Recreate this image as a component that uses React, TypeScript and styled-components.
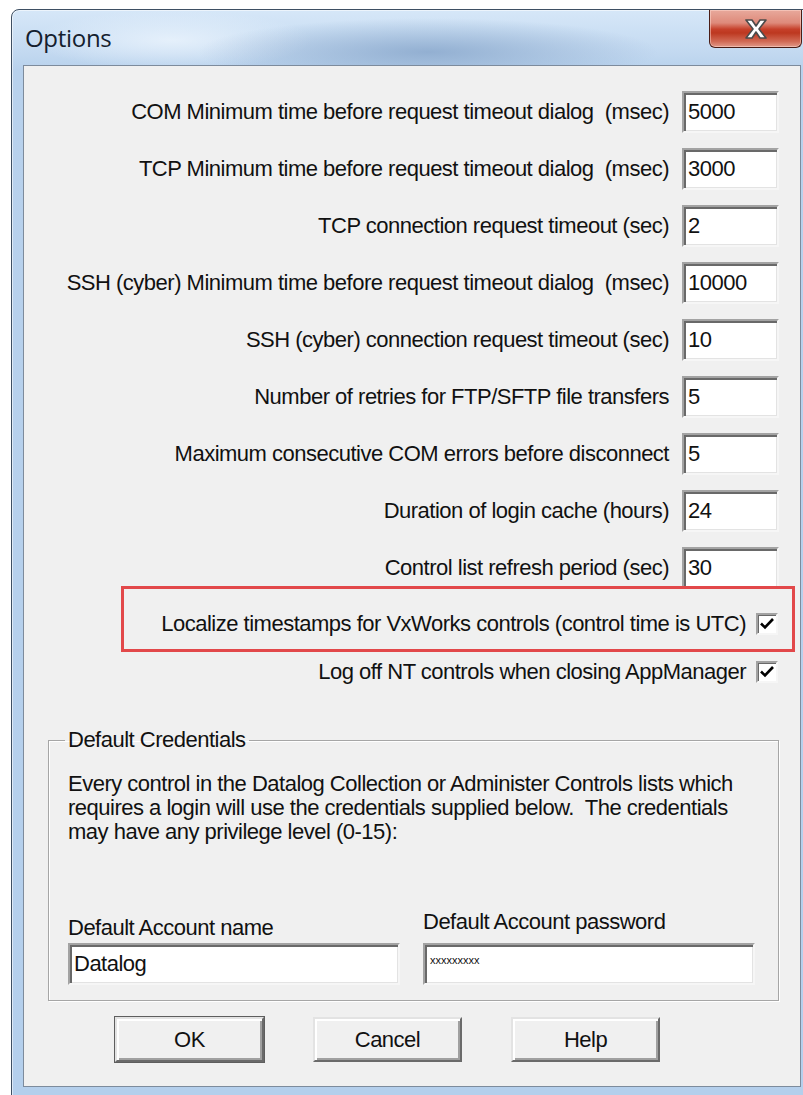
import React from "react";
import styled, { createGlobalStyle } from "styled-components";

const GlobalStyle = createGlobalStyle`
  html, body {
    margin: 0;
    padding: 0;
    background: #fff;
  }
  body {
    font-family: "Liberation Sans", Arial, sans-serif;
  }
`;

const Screen = styled.div`
  position: relative;
  width: 803px;
  height: 1095px;
  overflow: hidden;
  background: #fff;
  padding: 9px 0 0 11px;
  box-sizing: border-box;
`;

const Frame = styled.div`
  width: 802px;
  height: 1090px;
  box-sizing: border-box;
  border: 1px solid #3e4f63;
  border-radius: 8px 8px 0 0;
  box-shadow: inset 0 0 0 1px rgba(255, 255, 255, 0.55);
  background:
    radial-gradient(ellipse 230px 34px at 52% 42px, rgba(138, 168, 204, 0.85), rgba(138, 168, 204, 0) 100%),
    radial-gradient(ellipse 140px 30px at 20% 30px, rgba(232, 242, 252, 0.9), rgba(232, 242, 252, 0) 100%),
    linear-gradient(to bottom, #d6e7f8 0px, #c4daf1 40px, #b8d1ec 60px, #b4cfec 100%);
  display: flex;
  flex-direction: column;
`;

const TitleBar = styled.div`
  height: 55px;
  display: flex;
  align-items: flex-start;
  flex-shrink: 0;
`;

const Title = styled.div`
  margin: 13px 0 0 13px;
  font-family: "Open Sans", "Noto Sans", sans-serif;
  font-size: 24px;
  line-height: 30px;
  color: #14202e;
  letter-spacing: -0.3px;
`;

const CloseButton = styled.div`
  margin-left: auto;
  margin-right: 10px;
  width: 93px;
  height: 38px;
  box-sizing: border-box;
  border: 1px solid #4a1d16;
  border-top: none;
  border-radius: 0 0 6px 6px;
  background: linear-gradient(
    to bottom,
    #e8a99c 0%,
    #de8a7a 35%,
    #c6402a 52%,
    #bd3820 62%,
    #d16a55 85%,
    #e29a8a 100%
  );
  box-shadow: inset 0 0 0 1px rgba(255, 220, 210, 0.5);
  display: flex;
  align-items: center;
  justify-content: center;
`;

const Client = styled.div`
  margin: 0 11px;
  height: 1022px;
  flex-shrink: 0;
  box-sizing: border-box;
  border: 1px solid #7d8b9c;
  background: #f0f0f0;
  display: flex;
  flex-direction: column;
  color: #111;
  font-size: 22px;
  letter-spacing: -0.5px;
`;

const Settings = styled.div`
  display: grid;
  grid-template-columns: 1fr 97px;
  column-gap: 13px;
  row-gap: 15px;
  align-items: center;
  padding: 25px 21px 0 0;
`;

const Label = styled.div`
  text-align: right;
  white-space: pre;
  line-height: 24px;
`;

const Field = styled.div<{ $small?: boolean }>`
  height: 42px;
  box-sizing: border-box;
  background: #fff;
  border: 2px solid;
  border-color: #a3a3a3 #f6f6f6 #f6f6f6 #a3a3a3;
  box-shadow: inset 2px 2px 0 #696969, inset -1px -1px 0 #e3e3e3;
  padding: ${(p) => (p.$small ? "8px 0 0 5px" : "7px 0 0 4px")};
  font-size: ${(p) => (p.$small ? "11px" : "22px")};
  letter-spacing: ${(p) => (p.$small ? "0" : "-0.5px")};
  line-height: ${(p) => (p.$small ? "14px" : "24px")};
  white-space: pre;
  overflow: hidden;
`;

const Checks = styled.div`
  display: flex;
  flex-direction: column;
  gap: 26px;
  margin-top: 24px;
  padding-right: 22px;
`;

const CheckRow = styled.div`
  display: flex;
  align-items: center;
  justify-content: flex-end;
  gap: 10px;
  height: 22px;
`;

const Box = styled.div`
  width: 22px;
  height: 22px;
  box-sizing: border-box;
  background: #fff;
  border: 2px solid;
  border-color: #a3a3a3 #f6f6f6 #f6f6f6 #a3a3a3;
  box-shadow: inset 1px 1px 0 #696969;
  display: flex;
  align-items: center;
  justify-content: center;
`;

const Group = styled.fieldset`
  margin: 45px 21px 0 24px;
  padding: 0 19px 15px 19px;
  border: 1px solid #a6a6a6;
  box-shadow: inset 1px 1px 0 #fff, 1px 1px 0 #fff;
  min-width: 0;
`;

const Legend = styled.legend`
  padding: 0 3px;
  margin-left: -3px;
  line-height: 24px;
`;

const Note = styled.p`
  margin: 20px 0 0 0;
  line-height: 24px;
  white-space: pre;
`;

const Credentials = styled.div`
  display: grid;
  grid-template-columns: 332px 332px;
  column-gap: 23px;
  margin-top: 66px;
  align-items: end;
`;

const CredLabel = styled.div<{ $lift?: number }>`
  line-height: 24px;
  margin-bottom: ${(p) => 3 + (p.$lift ?? 0)}px;
`;

const Buttons = styled.div`
  display: flex;
  gap: 49px;
  margin-top: 16px;
  padding-left: 91px;
`;

const Button = styled.div<{ $default?: boolean }>`
  width: 149px;
  height: 45px;
  box-sizing: border-box;
  background: #f0f0f0;
  border: 2px solid;
  border-color: #e3e3e3 #6a6a6a #6a6a6a #e3e3e3;
  box-shadow: inset 2px 2px 0 #fff, inset -2px -2px 0 #a0a0a0
    ${(p) => (p.$default ? ", 0 0 0 1px #5e5e5e" : "")};
  display: flex;
  align-items: center;
  justify-content: center;
  line-height: 24px;
`;

const Highlight = styled.div`
  position: absolute;
  left: 121px;
  top: 586px;
  width: 674px;
  height: 66px;
  box-sizing: border-box;
  border: 3px solid #e2484a;
`;

const CloseGlyph = () => (
  <svg width="26" height="20" viewBox="0 0 26 20">
    <path
      d="M3 1 H9 L13 7 L17 1 H23 L16 10 L23 19 H17 L13 13 L9 19 H3 L10 10 Z"
      fill="#fff"
      stroke="#4b4b4b"
      strokeWidth="1.6"
      strokeLinejoin="round"
    />
  </svg>
);

const Tick = () => (
  <svg width="16" height="16" viewBox="0 0 16 16">
    <path d="M2 7.5 L6 11.5 L14 3" fill="none" stroke="#000" strokeWidth="2.6" />
  </svg>
);

const settings = [
  { label: "COM Minimum time before request timeout dialog  (msec)", value: "5000" },
  { label: "TCP Minimum time before request timeout dialog  (msec)", value: "3000" },
  { label: "TCP connection request timeout (sec)", value: "2" },
  { label: "SSH (cyber) Minimum time before request timeout dialog  (msec)", value: "10000" },
  { label: "SSH (cyber) connection request timeout (sec)", value: "10" },
  { label: "Number of retries for FTP/SFTP file transfers", value: "5" },
  { label: "Maximum consecutive COM errors before disconnect", value: "5" },
  { label: "Duration of login cache (hours)", value: "24" },
  { label: "Control list refresh period (sec)", value: "30" },
];

const checks = [
  "Localize timestamps for VxWorks controls (control time is UTC)",
  "Log off NT controls when closing AppManager",
];

const note = [
  "Every control in the Datalog Collection or Administer Controls lists which",
  "requires a login will use the credentials supplied below.  The credentials",
  "may have any privilege level (0-15):",
].join("\n");

export default function App() {
  return (
    <>
      <GlobalStyle />
      <Screen>
        <Frame>
          <TitleBar>
            <Title>Options</Title>
            <CloseButton>
              <CloseGlyph />
            </CloseButton>
          </TitleBar>
          <Client>
            <Settings>
              {settings.map((s) => (
                <React.Fragment key={s.label}>
                  <Label>{s.label}</Label>
                  <Field>{s.value}</Field>
                </React.Fragment>
              ))}
            </Settings>
            <Checks>
              {checks.map((c) => (
                <CheckRow key={c}>
                  <Label>{c}</Label>
                  <Box>
                    <Tick />
                  </Box>
                </CheckRow>
              ))}
            </Checks>
            <Group>
              <Legend>Default Credentials</Legend>
              <Note>{note}</Note>
              <Credentials>
                <CredLabel>Default Account name</CredLabel>
                <CredLabel $lift={6}>Default Account password</CredLabel>
                <Field>Datalog</Field>
                <Field $small>xxxxxxxxx</Field>
              </Credentials>
            </Group>
            <Buttons>
              <Button $default>OK</Button>
              <Button>Cancel</Button>
              <Button>Help</Button>
            </Buttons>
          </Client>
        </Frame>
        <Highlight />
      </Screen>
    </>
  );
}
